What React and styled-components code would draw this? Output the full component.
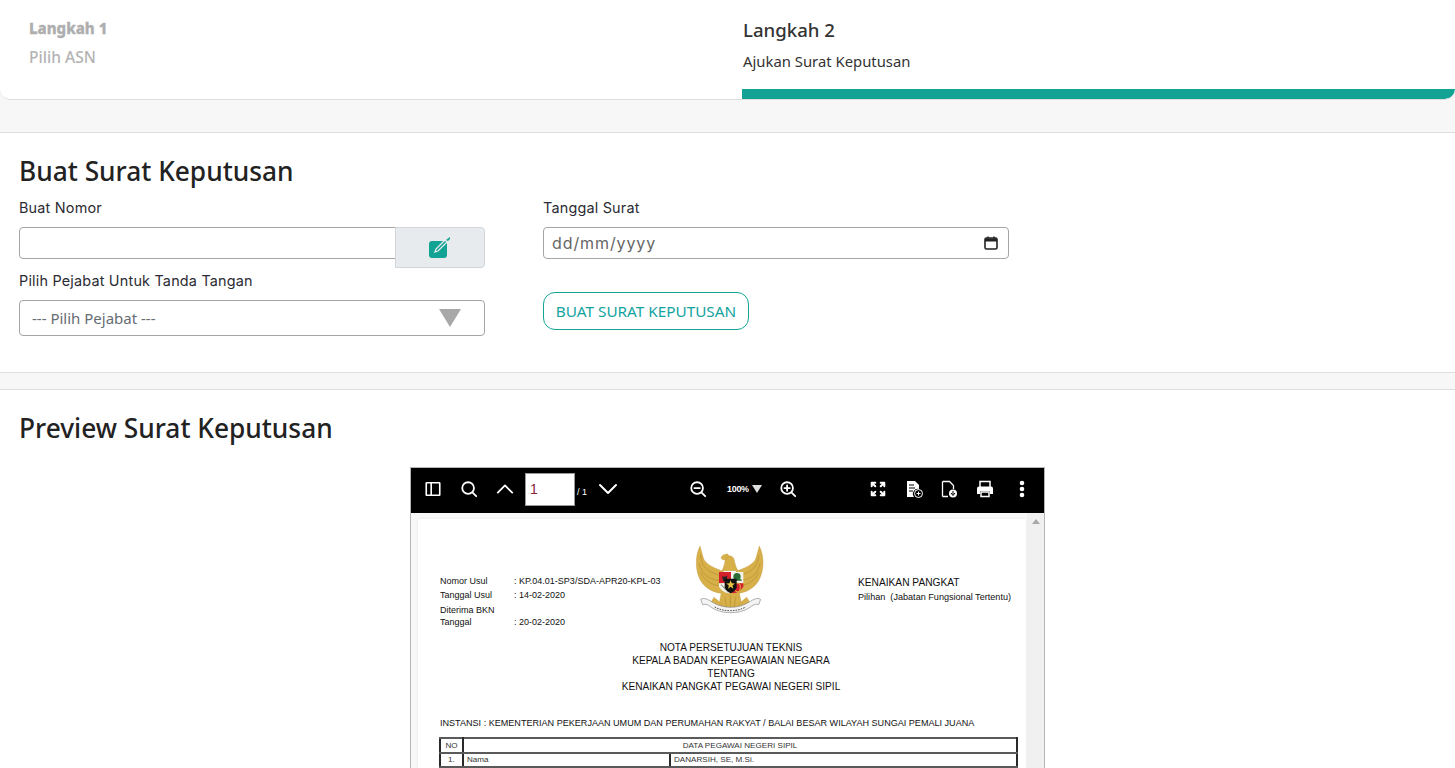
import React from "react";
import styled, { createGlobalStyle } from "styled-components";

const Global = createGlobalStyle`
  html, body { margin: 0; padding: 0; height: 768px; overflow: hidden; background: #f7f7f7; }
  * { box-sizing: border-box; }
  body { font-family: "Noto Sans", sans-serif; color: #222; }
`;
const Page = styled.div`width: 1455px; height: 768px; overflow: hidden; display: flex; flex-direction: column;`;
const Steps = styled.div`
  flex: none; height: 100px; display: grid; grid-template-columns: 742px 1fr; background: #fff;
  border-bottom: 1px solid #dedede; border-radius: 0 0 10px 10px; overflow: hidden;
`;
const StepDone = styled.div`padding: 17px 0 0 29px; color: #aeaeae;`;
const StepDoneTitle = styled.div`font-size: 15px; font-weight: 800; line-height: 22px; -webkit-text-stroke: .3px #aeaeae;`;
const StepDoneSub = styled.div`font-size: 15.6px; font-weight: 500; line-height: 22px; margin-top: 7px; color: #b3b3b3;`;
const StepActive = styled.div`
  padding: 18px 0 0 1px; border-bottom: 10px solid #12a394; color: #333;
  border-radius: 0 0 10px 0;
`;
const StepActiveTitle = styled.div`font-size: 18.6px; font-weight: 500; line-height: 24px;`;
const StepActiveSub = styled.div`font-size: 14.85px; line-height: 22px; margin-top: 8px;`;
const Section = styled.section`
  flex: none; background: #fff; border-top: 1px solid #dedede; padding: ${p => p.$pad};
  margin-top: ${p => p.$top}px; ${p => p.$h && `height: ${p.$h}px; border-bottom: 1px solid #dedede;`}
  ${p => p.$grow && "flex: 1;"}
`;
const Title = styled.h2`margin: 0; font-size: 26.3px; font-weight: 500; line-height: 36px; color: #222; padding-left: ${p => p.$indent || 0}px;`;
const FormGrid = styled.div`display: grid; grid-template-columns: 466px 466px; column-gap: 58px; margin-top: 9px;`;
const Col = styled.div`display: flex; flex-direction: column;`;
const Label = styled.div`
  font-family: Inter, sans-serif; font-size: 14.4px; line-height: 20px; color: #2b2b33; margin-bottom: 9px;
  letter-spacing: .2px;
`;
const Row = styled.div`display: flex; align-items: flex-start; margin-bottom: 3px;`;
const TextBox = styled.input`
  flex: none; width: 377px; height: 32px; border: 1px solid #a5a5a5; border-radius: 4px 0 0 4px;
  background: #fff; outline: none; display: block; padding: 0 12px;
`;
const Addon = styled.div`
  flex: 1; height: 41px; margin-left: -1px; background: #e8ebee; border: 1px solid #d2d6da; border-radius: 0 4px 4px 0;
  display: flex; align-items: center; justify-content: center;
`;
const SelectBox = styled.div`
  height: 36px; border: 1px solid #a5a5a5; border-radius: 4px; display: flex; align-items: center;
  justify-content: space-between; padding: 0 23px 0 12px; font-size: 15px; color: #666c72;
`;
const DateBox = styled.div`
  height: 32px; border: 1px solid #a5a5a5; border-radius: 4px; display: flex; align-items: center;
  justify-content: space-between; padding: 0 10px 0 8px; font-family: Inter, sans-serif; font-size: 16px; letter-spacing: .9px; color: #666;
`;
const OutlineButton = styled.button`
  align-self: flex-start; width: 206px; height: 38px; margin-top: 33px; border: 1px solid #12a394; border-radius: 12px;
  background: #fff; color: #12a3a0; font-family: "Noto Sans", sans-serif; font-size: 15.3px; padding: 0;
`;
const Viewer = styled.div`
  width: 635px; margin: 21px 0 0 410px; border: 1px solid #b5b5b5; border-bottom: 0; background: #f8f8f8;
  height: 400px; overflow: hidden;
`;
const Toolbar = styled.div`
  height: 45px; background: #000; display: flex; align-items: center; color: #fff; padding: 0 0 3px 13px;
`;
const Tool = styled.span`display: flex; align-items: center; justify-content: center; flex: none; width: ${p => p.$w || 18}px; margin-left: ${p => p.$ml || 0}px;`;
const PageNum = styled.div`
  flex: none; width: 50px; height: 33px; margin: 0 0 0 ${p => p.$ml}px; background: #fff; border: 1px solid #999; color: #8a2438;
  font-family: "Liberation Sans", sans-serif; font-size: 14px; line-height: 31px; padding-left: 4px;
`;
const PageTotal = styled.span`flex: none; font-family: "Liberation Sans", sans-serif; font-size: 9px; margin: 5px 0 0 2px; width: 12px;`;
const ZoomLabel = styled.span`flex: none; font-family: "Liberation Sans", sans-serif; font-size: 9px; font-weight: 700; margin-left: 20px; letter-spacing: -.3px; width: 23px;`;
const ZoomCaret = styled.span`
  flex: none; width: 0; height: 0; border-left: 5px solid transparent; border-right: 5px solid transparent; border-top: 8px solid #ddd; margin: 0 0 0 2px;
`;
const DocArea = styled.div`display: flex; height: 360px;`;
const Sheet = styled.div`
  width: 609px; margin: 6px 0 0 7px; background: #fff; padding: 26px 0 0 22px; color: #111;
  font-family: "Liberation Sans", sans-serif; font-size: 9px; box-shadow: 0 0 3px rgba(0,0,0,.08);
`;
const Scroll = styled.div`
  flex: none; width: 17px; margin-left: 1px; background: #f0f0f0; display: flex; justify-content: center; padding-top: 6px;
`;
const ScrollArrow = styled.span`
  width: 0; height: 0; border-left: 4px solid transparent; border-right: 4px solid transparent; border-bottom: 5px solid #a8a8a8;
`;
const DocHead = styled.div`display: grid; grid-template-columns: 256px 162px 1fr; height: 95px;`;
const Meta = styled.div`display: grid; grid-template-columns: 74px 1fr; grid-auto-rows: 13.5px; align-content: start; padding-top: 30px; line-height: 13.5px; font-size: 9px; white-space: nowrap;`;
const MetaGap = styled.div`grid-column: 1 / -1; line-height: 9px; height: 15px; padding-top: 4px;`;
const Emblem = styled.svg`display: block; margin: -11px 0 0 -16px;`;
const Kind = styled.div`padding-top: 31px; line-height: 14px; font-size: 10.2px; white-space: nowrap;`;
const KindSmall = styled.div`font-size: 9.1px; white-space: pre;`;
const Heading = styled.div`
  width: 582px; text-align: center; font-size: 10.1px; line-height: 13px; margin-top: 1px;
`;
const Instansi = styled.div`font-size: 9.07px; line-height: 13px; margin-top: 24px; white-space: nowrap;`;
const DataTable = styled.table`
  border-collapse: collapse; margin: 7px 0 0 -1px; width: 579px; table-layout: fixed; font-size: 8.1px; color: #333;
  td { border: 2px solid #5a5a5a; border-left-color: #2a2a2a; border-right-color: #2a2a2a; height: 14.5px; padding: 0 3px; }
`;
const Center = styled.td`text-align: center;`;

const Ic = ({ children, w = 20, h = 20, sw = 2 }) => (
  <svg width={w} height={h} viewBox="0 0 20 20" fill="none" stroke="#fff" strokeWidth={sw} strokeLinecap="round" strokeLinejoin="round">{children}</svg>
);

const Garuda = () => (
  <Emblem width="100" height="90" viewBox="0 0 300 270">
    <g fill="#d8b04a" stroke="#b88f2e" strokeWidth="1">
      <path d="M60 36C44 68 46 112 62 140c14 24 40 36 62 38l6-66C108 104 76 92 70 72z" />
      <path d="M238 36c16 32 14 76-2 104-14 24-40 36-62 38l-6-66c22-8 54-20 60-40z" />
      <path d="M125 170h52l8 44-12 12-22 8-22-8-12-12z" />
      <path d="M135 70c10-8 24-6 27 6 3 10 4 22 12 34h-48c6-12 10-24 9-40z" />
      <path d="M123 72c2-8 10-12 20-12 4 4 2 14-6 16-6 2-10 2-14-4z" />
      <path d="M102 190l24 20-8 14-26-18zM200 190l-24 20 8 14 26-18z" />
    </g>
    <g stroke="#a9832a" strokeWidth="2" fill="none" opacity=".75">
      <path d="M62 62c2 30 14 52 60 62M58 88c6 30 24 48 62 52M62 116c12 24 32 36 58 40" />
      <path d="M236 62c-2 30-14 52-60 62M240 88c-6 30-24 48-62 52M236 116c-12 24-32 36-58 40" />
      <path d="M135 190l5 36M151 185v46M167 190l-5 36" />
    </g>
    <path d="M117 114h36v34h-36z" fill="#d3202c" />
    <path d="M153 114h37v34h-37z" fill="#f3f3ec" />
    <path d="M117 148h36l6 28-14 2c-12-3-22-10-28-20z" fill="#f4f4ee" />
    <path d="M153 148h37v10c-6 10-16 17-28 20l-9-2z" fill="#d3202c" />
    <path d="M126 124c4 6 10 6 16 0l-2 12-4 6-6 0-2-8z" fill="#222" />
    <circle cx="171" cy="128" r="11" fill="#2a6d36" /><path d="M158 136h26l2 4h-30z" fill="#2a6d36" />
    <path d="M123 152l22 22" stroke="#7b7b6b" strokeWidth="4" strokeDasharray="3 2" />
    <ellipse cx="172" cy="160" rx="9" ry="13" fill="none" stroke="#e3b93d" strokeWidth="3" />
    <path d="M134 134h36v26c-3 10-10 14-18 18-8-4-15-8-18-18z" fill="#111" />
    <path d="M152 139l3.5 9 9.5.5-7.5 6 2.5 9.5-8-5.500-8 5.500 2.500-9.500-7.500-6 9.500-.5z" fill="#e7c445" />
    <path d="M62 196c10-6 22 0 34 8 16 10 36 16 56 16s40-6 56-16c12-8 24-14 34-8l-6 16c-10-4-18 2-26 8-18 12-38 16-58 16s-40-4-58-16c-8-6-16-12-26-8z" fill="#f4f4f4" stroke="#888" strokeWidth="2" />
    <path d="M104 219c14 8 30 11 47 11s32-3 46-11" stroke="#555" strokeWidth="3" strokeDasharray="5 3" fill="none" />
  </Emblem>
);

export default function App() {
  return (
    <Page>
      <Global />
      <Steps>
        <StepDone>
          <StepDoneTitle>Langkah 1</StepDoneTitle>
          <StepDoneSub>Pilih ASN</StepDoneSub>
        </StepDone>
        <StepActive>
          <StepActiveTitle>Langkah 2</StepActiveTitle>
          <StepActiveSub>Ajukan Surat Keputusan</StepActiveSub>
        </StepActive>
      </Steps>
      <Section $top={32} $h={241} $pad="20px 19px 0">
        <Title>Buat Surat Keputusan</Title>
        <FormGrid>
          <Col>
            <Label>Buat Nomor</Label>
            <Row>
              <TextBox />
              <Addon>
                <svg width="24" height="22" viewBox="0 0 24 22">
                  <rect x="1" y="4" width="18" height="17" rx="3" fill="#12a394" />
                  <path d="M7 15l1-3L18 2l2 2L10 14z" fill="none" stroke="#e8ebee" strokeWidth="1.300" />
                  <path d="M18 3l4-3v2l-2 2z" fill="#12a394" />
                </svg>
              </Addon>
            </Row>
            <Label>Pilih Pejabat Untuk Tanda Tangan</Label>
            <SelectBox>
              --- Pilih Pejabat ---
              <svg width="22" height="18" viewBox="0 0 22 18"><path d="M0 0h22L11 18z" fill="#a8a8a8" /></svg>
            </SelectBox>
          </Col>
          <Col>
            <Label>Tanggal Surat</Label>
            <DateBox>
              dd/mm/yyyy
              <svg width="14" height="14" viewBox="0 0 14 14" fill="none">
                <rect x="1" y="2" width="12" height="11" rx="1.500" stroke="#222" strokeWidth="1.600" />
                <path d="M1 2.500h12v3H1z" fill="#222" /><path d="M4 .500v2M10 .500v2" stroke="#222" strokeWidth="1.500" />
              </svg>
            </DateBox>
            <OutlineButton>BUAT SURAT KEPUTUSAN</OutlineButton>
          </Col>
        </FormGrid>
      </Section>
      <Section $top={16} $grow $pad="20px 0 0">
        <Title $indent={19}>Preview Surat Keputusan</Title>
        <Viewer>
          <Toolbar>
            <Tool><Ic><rect x="2.500" y="3" width="15" height="14" rx=".5" strokeWidth="1.800" /><path d="M8 3v14" strokeWidth="1.800" /></Ic></Tool>
            <Tool $ml={18}><Ic><circle cx="9" cy="9" r="6.500" /><path d="M14 14l4 4" /></Ic></Tool>
            <Tool $ml={18}><Ic w={20} h={20}><path d="M2 14l8-8 8 8" /></Ic></Tool>
            <PageNum $ml={11}>1</PageNum>
            <PageTotal>/ 1</PageTotal>
            <Tool $ml={9} $w={20}><Ic><path d="M2 6l8 8 8-8" /></Ic></Tool>
            <Tool $ml={71}><Ic><circle cx="9" cy="9" r="6.500" /><path d="M14 14l4 4M6 9h6" /></Ic></Tool>
            <ZoomLabel>100%</ZoomLabel>
            <ZoomCaret />
            <Tool $ml={17}><Ic><circle cx="9" cy="9" r="6.500" /><path d="M14 14l4 4M6 9h6M9 6v6" /></Ic></Tool>
            <Tool $ml={72}><Ic sw={2.200}><path d="M3 7V3h4M17 7V3h-4M3 13v4h4M17 13v4h-4M3 3l4 4M17 3l-4 4M3 17l4-4M17 17l-4-4" /></Ic></Tool>
            <Tool $ml={18}><svg width="18" height="18" viewBox="0 0 18 18"><path d="M2 1h8l4 4v4a5 5 0 0 0-5 8H2z" fill="#fff" /><path d="M4 5h5M4 8h6M4 11h4" stroke="#000" strokeWidth="1.200" /><circle cx="13.500" cy="13.500" r="4" fill="#000" stroke="#fff" /><path d="M13.500 11.500v4M11.500 13.500h4" stroke="#fff" /></svg></Tool>
            <Tool $ml={17}><svg width="18" height="18" viewBox="0 0 18 18"><path d="M2.500 1.500h7l4 4v3.500M8 16.500H2.500z" fill="none" stroke="#fff" strokeWidth="1.300" /><path d="M2.500 1.500v15" stroke="#fff" strokeWidth="1.300" /><circle cx="13" cy="13.500" r="4" fill="#fff" /><path d="M13 11v3.500M11 13l2 2.500 2-2.500" stroke="#000" fill="none" /></svg></Tool>
            <Tool $ml={18}><svg width="18" height="18" viewBox="0 0 18 18"><path d="M4 7V1.500h10V7" fill="none" stroke="#fff" strokeWidth="1.500" /><path d="M1 8.500a2 2 0 0 1 2-2h12a2 2 0 0 1 2 2V14h-3v-3H4v3H1z" fill="#fff" /><path d="M5 12h8v4.500H5z" fill="none" stroke="#fff" strokeWidth="1.500" /></svg></Tool>
            <Tool $ml={19}><svg width="18" height="18" viewBox="0 0 18 18" fill="#fff"><circle cx="9" cy="3" r="2.300" /><circle cx="9" cy="9" r="2.300" /><circle cx="9" cy="15" r="2.300" /></svg></Tool>
          </Toolbar>
          <DocArea>
            <Sheet>
              <DocHead>
                <Meta>
                  <span>Nomor Usul</span><span>: KP.04.01-SP3/SDA-APR20-KPL-03</span>
                  <span>Tanggal Usul</span><span>: 14-02-2020</span>
                  <MetaGap>Diterima BKN</MetaGap>
                  <span>Tanggal</span><span>: 20-02-2020</span>
                </Meta>
                <Garuda />
                <Kind>
                  KENAIKAN PANGKAT
                  <KindSmall>Pilihan  (Jabatan Fungsional Tertentu)</KindSmall>
                </Kind>
              </DocHead>
              <Heading>
                <div>NOTA PERSETUJUAN TEKNIS</div>
                <div>KEPALA BADAN KEPEGAWAIAN NEGARA</div>
                <div>TENTANG</div>
                <div>KENAIKAN PANGKAT PEGAWAI NEGERI SIPIL</div>
              </Heading>
              <Instansi>INSTANSI : KEMENTERIAN PEKERJAAN UMUM DAN PERUMAHAN RAKYAT / BALAI BESAR WILAYAH SUNGAI PEMALI JUANA</Instansi>
              <DataTable>
                <colgroup><col width="23" /><col width="207" /><col /></colgroup>
                <tbody>
                  <tr><Center>NO</Center><Center colSpan={2}>DATA PEGAWAI NEGERI SIPIL</Center></tr>
                  <tr><Center>1.</Center><td>Nama</td><td>DANARSIH,  SE, M.Si.</td></tr>
                </tbody>
              </DataTable>
            </Sheet>
            <Scroll><ScrollArrow /></Scroll>
          </DocArea>
        </Viewer>
      </Section>
    </Page>
  );
}
